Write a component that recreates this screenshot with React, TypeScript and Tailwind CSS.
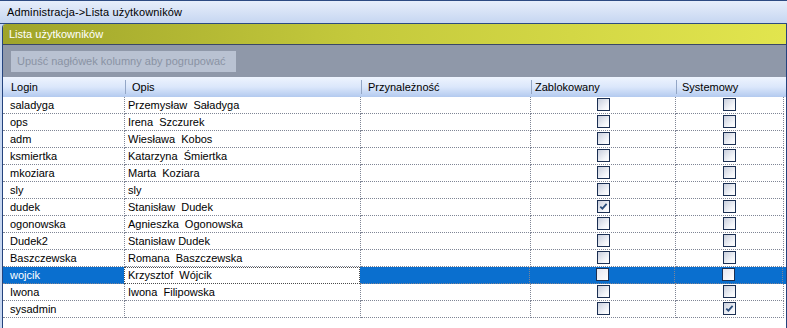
import React from "react";

type Row = { login: string; opis: string; blocked?: boolean; system?: boolean; sel?: boolean };

const rows: Row[] = [
  { login: "saladyga", opis: "Przemysław  Saładyga" },
  { login: "ops", opis: "Irena  Szczurek" },
  { login: "adm", opis: "Wiesława  Kobos" },
  { login: "ksmiertka", opis: "Katarzyna  Śmiertka" },
  { login: "mkoziara", opis: "Marta  Koziara" },
  { login: "sly", opis: "sly" },
  { login: "dudek", opis: "Stanisław  Dudek", blocked: true },
  { login: "ogonowska", opis: "Agnieszka  Ogonowska" },
  { login: "Dudek2", opis: "Stanisław Dudek" },
  { login: "Baszczewska", opis: "Romana  Baszczewska" },
  { login: "wojcik", opis: "Krzysztof  Wójcik", sel: true },
  { login: "Iwona", opis: "Iwona  Filipowska" },
  { login: "sysadmin", opis: "", system: true },
];

function Check({ checked, sel }: { checked?: boolean; sel?: boolean }) {
  return (
    <div
      className={
        sel
          ? "w-[13px] h-[13px] border border-[#1b2f52] flex items-center justify-center bg-[linear-gradient(135deg,#e4e6f0,#ffffff)]"
          : "w-[13px] h-[13px] border border-[#1b2f52] flex items-center justify-center bg-[linear-gradient(135deg,#c9cfdd,#f4f6fa_70%,#ffffff)]"
      }
    >
      {checked && (
        <svg width="9" height="9" viewBox="0 0 9 9">
          <path d="M1.3 4.6 L3.4 6.6 L7.6 1.8" stroke="#2a4d7c" strokeWidth="1.8" fill="none" />
        </svg>
      )}
    </div>
  );
}

export default function App() {
  return (
    <div
      className="w-[787px] h-[328px] overflow-hidden bg-white text-[11px] text-black flex flex-col"
      style={{ fontFamily: '"Liberation Sans", Arial, sans-serif' }}
    >
      {/* title bar */}
      <div className="h-[24px] shrink-0 border-t border-b border-[#2c4a82] bg-[linear-gradient(#e6eefb,#c6d6f1)] flex items-center pl-[7px] tracking-[0.15px]">
        Administracja-&gt;Lista użytkowników
      </div>

      {/* panel */}
      <div className="flex-1 flex bg-[#c8d8f1] pl-[2px]">
        <div className="flex-1 flex flex-col border-l border-r border-[#24437d] rounded-tl-[4px] overflow-hidden bg-white">
          <div className="h-[21px] shrink-0 border-b border-[#3b4866] bg-[linear-gradient(90deg,#9fa42a,#c4c93c_45%,#e2e54e)] text-white flex items-center pl-[6px]">
            Lista użytkowników
          </div>
          <div className="h-[32px] shrink-0 bg-[#8f98a9] pt-[6px] pl-[8px]">
            <div className="w-[225px] h-[21px] bg-[#b9c2d2] text-[#8a93a4] flex items-center pl-[6px] text-[11px] whitespace-nowrap overflow-hidden">
              Upuść nagłówek kolumny aby pogrupować
            </div>
          </div>
          {/* header */}
          <div className="h-[20px] shrink-0 flex bg-[linear-gradient(#eef4fe,#dbe7fb_50%,#b3caef)]">
            <div className="w-[122px] flex items-center pl-[8px]">Login</div>
            <div className="w-[236px] flex items-center pl-[6px] border-l border-[#93a6c6] my-[3px]">Opis</div>
            <div className="w-[170px] flex items-center pl-[6px] border-l border-[#93a6c6] my-[3px]">Przynależność</div>
            <div className="w-[145px] flex items-center pl-[3px] border-l border-[#93a6c6] my-[3px]">Zablokowany</div>
            <div className="w-[108px] flex items-center pl-[5px] border-l border-[#93a6c6] my-[3px]">Systemowy</div>
          </div>
          {/* rows */}
          <div className="flex flex-col">
            {rows.map((r) => (
              <div key={r.login} className={r.sel ? "h-[17px] flex bg-[#0a6fcf]" : "h-[17px] flex"}>
                <div
                  className={
                    r.sel
                      ? "w-[122px] border-b border-r border-dotted border-[#7f8595] pl-[7px] leading-[16px] text-white whitespace-pre"
                      : "w-[122px] border-b border-r border-dotted border-[#7f8595] pl-[7px] leading-[16px] whitespace-pre"
                  }
                >
                  {r.login}
                </div>
                <div
                  className={
                    r.sel
                      ? "w-[236px] border border-dotted border-[#4a4a4a] bg-white pl-[3px] leading-[14px] whitespace-pre -ml-px"
                      : "w-[236px] border-b border-r border-dotted border-[#7f8595] pl-[3px] leading-[16px] whitespace-pre"
                  }
                >
                  {r.opis}
                </div>
                <div className="w-[170px] border-b border-r border-dotted border-[#7f8595]" />
                <div className="w-[145px] border-b border-r border-dotted border-[#7f8595] flex justify-center pt-[1px]">
                  <Check checked={r.blocked} sel={r.sel} />
                </div>
                <div className="w-[108px] border-b border-r border-dotted border-[#7f8595] flex justify-center pt-[1px]">
                  <Check checked={r.system} sel={r.sel} />
                </div>
              </div>
            ))}
          </div>
        </div>
      </div>
    </div>
  );
}
